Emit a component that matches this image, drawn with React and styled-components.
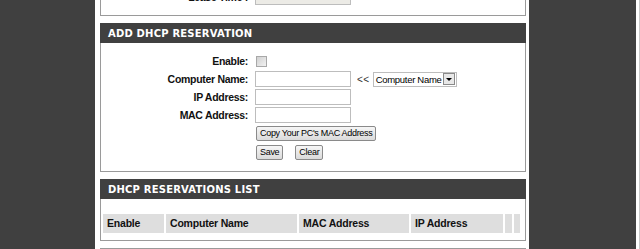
import React from "react";
import styled, { createGlobalStyle } from "styled-components";

const GlobalStyle = createGlobalStyle`
  body {
    margin: 0;
    background: #ffffff;
    overflow: hidden;
    font-family: "Liberation Sans", Arial, sans-serif;
  }
`;

const Page = styled.div`
  display: flex;
  flex-direction: row;
  width: 640px;
  height: 249px;
  overflow: hidden;
`;

const SideColumn = styled.div`
  width: ${(p) => p.w}px;
  flex-shrink: 0;
  background-color: #404040;
`;

const Edge = styled.div`
  width: 4px;
  flex-shrink: 0;
  background: #ffffff;
  border-right: 1px solid #c8c8c8;
  box-sizing: border-box;
`;

const Main = styled.div`
  width: 434px;
  flex-shrink: 0;
  padding: 0 3px 0 5px;
  box-sizing: border-box;
  display: flex;
  flex-direction: column;
  gap: 7px;
  & > * {
    flex-shrink: 0;
  }
`;

const Panel = styled.div`
  border: 1px solid #9a9a9a;
  border-top: none;
  background: #ffffff;
  ${(p) => p.clipped && `height: 15px; overflow: hidden; display: flex; flex-direction: column; justify-content: flex-end;`}
`;

const PanelHeader = styled.div`
  height: 20px;
  background-color: #404040;
  color: #ffffff;
  font-family: "DejaVu Sans", Verdana, sans-serif;
  font-weight: bold;
  font-size: 10px;
  letter-spacing: 0.2px;
  padding-left: 8px;
  display: flex;
  align-items: center;
`;

const Form = styled.div`
  display: grid;
  grid-template-columns: 147px 1fr;
  column-gap: 7px;
  row-gap: 2px;
  padding: ${(p) => (p.clipped ? "0 0 10px" : "10px 0 9px")};
  align-items: center;
`;

const Label = styled.div`
  text-align: right;
  font-weight: bold;
  font-size: 10.5px;
  letter-spacing: -0.3px;
  color: #111;
  height: 16px;
  line-height: 16px;
`;

const Field = styled.div`
  display: flex;
  align-items: center;
  height: ${(p) => p.h || 16}px;
`;

const TextInput = styled.div`
  width: 92px;
  height: 14px;
  border: 1px solid #bdbdbd;
  background: ${(p) => (p.disabled ? "#ecebe6" : "#ffffff")};
  font-size: 10px;
  color: #666;
  line-height: 14px;
  padding-left: 2px;
  box-sizing: content-box;
`;

const CheckBox = styled.div`
  width: 9px;
  height: 9px;
  border: 1px solid #a8a8a8;
  background: linear-gradient(135deg, #d0d0d0, #f2f2f2);
  margin-left: 1px;
`;

const Arrows = styled.span`
  font-size: 10px;
  color: #333;
  margin: 0 3px 0 6px;
  letter-spacing: 0.5px;
`;

const Select = styled.div`
  display: flex;
  align-items: center;
  height: 13px;
  border: 1px solid #bdbdbd;
  font-size: 9.5px;
  letter-spacing: -0.3px;
  color: #000;
  padding-left: 2px;
  gap: 2px;
`;

const SelectArrow = styled.div`
  width: 10px;
  height: 10px;
  background: #e8e8e8;
  border: 1px solid #8a8a8a;
  display: flex;
  align-items: center;
  justify-content: center;
  margin-right: 1px;
`;

const Button = styled.div`
  height: 13px;
  padding: 0 3px;
  border: 1px solid #8a8a8a;
  border-radius: 2px;
  background: linear-gradient(#f6f6f6, #dadada);
  font-size: 9px;
  letter-spacing: -0.3px;
  line-height: 13px;
  color: #000;
  margin-left: 1px;
  margin-right: ${(p) => p.mr || 0}px;
`;

const ListBody = styled.div`
  padding: 15px 7px 7px 2px;
`;

const TableRow = styled.div`
  display: grid;
  grid-template-columns: 61px 131px 110px 92px 7px 6px;
  column-gap: 2px;
`;

const HeadCell = styled.div`
  background: #dedede;
  height: 19px;
  line-height: 19px;
  font-weight: bold;
  font-size: 10.5px;
  letter-spacing: -0.2px;
  padding-left: 4px;
  color: #111;
`;

const NextPanel = styled.div`
  border: 1px solid #9a9a9a;
  border-bottom: none;
  height: 10px;
`;

const DropIcon = () => (
  <svg width="6" height="3" viewBox="0 0 6 3">
    <path d="M0 0h6L3 3z" fill="#000" />
  </svg>
);

export default function App() {
  return (
    <>
      <GlobalStyle />
      <Page>
        <SideColumn w={95} />
        <Main>
          <Panel clipped>
            <Form clipped>
              <Label>Lease Time :</Label>
              <Field>
                <TextInput disabled>ooooo</TextInput>
              </Field>
            </Form>
          </Panel>
          <div>
            <PanelHeader>ADD DHCP RESERVATION</PanelHeader>
            <Panel>
              <Form>
                <Label>Enable:</Label>
                <Field>
                  <CheckBox />
                </Field>
                <Label>Computer Name:</Label>
                <Field>
                  <TextInput />
                  <Arrows>&lt;&lt;</Arrows>
                  <Select>
                    Computer Name
                    <SelectArrow>
                      <DropIcon />
                    </SelectArrow>
                  </Select>
                </Field>
                <Label>IP Address:</Label>
                <Field>
                  <TextInput />
                </Field>
                <Label>MAC Address:</Label>
                <Field>
                  <TextInput />
                </Field>
                <Label />
                <Field h={15}>
                  <Button>Copy Your PC's MAC Address</Button>
                </Field>
                <Label />
                <Field h={19}>
                  <Button mr={11}>Save</Button>
                  <Button>Clear</Button>
                </Field>
              </Form>
            </Panel>
          </div>
          <div>
            <PanelHeader>DHCP RESERVATIONS LIST</PanelHeader>
            <Panel>
              <ListBody>
                <TableRow>
                  <HeadCell>Enable</HeadCell>
                  <HeadCell>Computer Name</HeadCell>
                  <HeadCell>MAC Address</HeadCell>
                  <HeadCell>IP Address</HeadCell>
                  <HeadCell />
                  <HeadCell />
                </TableRow>
              </ListBody>
            </Panel>
          </div>
          <NextPanel />
        </Main>
        <SideColumn w={107} />
        <Edge />
      </Page>
    </>
  );
}
